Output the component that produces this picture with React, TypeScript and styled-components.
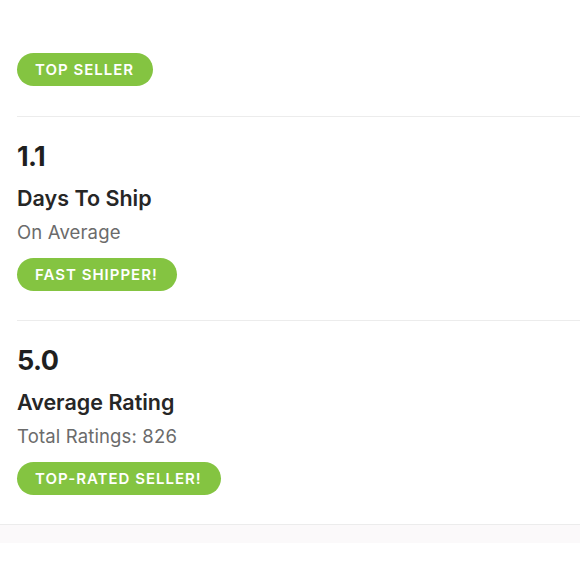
import styled, { createGlobalStyle } from "styled-components";

const GlobalStyle = createGlobalStyle`
    body {
        margin: 0;
        background: #ffffff;
        font-family: "Inter", "Liberation Sans", sans-serif;
        color: #222222;
    }
`;

const Page = styled.div`
    width: 580px;
    height: 580px;
    overflow: hidden;
    background: #ffffff;
`;

const Content = styled.div`
    padding-left: 17px;
`;

const TopBlock = styled.div`
    padding: 53px 0 30px;
`;

const Section = styled.section`
    border-top: 1px solid #ececec;
    padding: 23px 0 29px;
    display: flex;
    flex-direction: column;
    align-items: flex-start;
`;

const Stat = styled.div`
    font-size: 27px;
    line-height: 34px;
    font-weight: 700;
    color: #1f1f1f;
    letter-spacing: -0.6px;
`;

const Label = styled.div`
    margin-top: 11px;
    font-size: 21.5px;
    line-height: 26px;
    font-weight: 600;
    color: #262626;
`;

const Sub = styled.div`
    margin-top: 10px;
    font-size: 18.5px;
    line-height: 22px;
    color: #6b6b6b;
    letter-spacing: 0.15px;
`;

const Pill = styled.span<{ $spaced?: boolean }>`
    display: inline-flex;
    align-items: center;
    height: 33px;
    margin-top: ${(props) => (props.$spaced ? "15px" : "0")};
    padding: 0 19px 0 18px;
    border-radius: 17px;
    background: #84c441;
    color: #ffffff;
    font-size: 15px;
    font-weight: 600;
    letter-spacing: 1px;
    text-transform: uppercase;
`;

const Footer = styled.div`
    border-top: 1px solid #ececec;
    height: 18px;
    background: #fbf9fa;
`;

interface StatData {
    value: string;
    label: string;
    sub: string;
    badge: string;
}

const stats: StatData[] = [
    { value: "1.1", label: "Days To Ship", sub: "On Average", badge: "Fast Shipper!" },
    { value: "5.0", label: "Average Rating", sub: "Total Ratings: 826", badge: "Top-Rated Seller!" },
];

function App() {
    return (
        <Page>
            <GlobalStyle />
            <Content>
                <TopBlock>
                    <Pill>Top Seller</Pill>
                </TopBlock>
                {stats.map((s) => (
                    <Section key={s.label}>
                        <Stat>{s.value}</Stat>
                        <Label>{s.label}</Label>
                        <Sub>{s.sub}</Sub>
                        <Pill $spaced>{s.badge}</Pill>
                    </Section>
                ))}
            </Content>
            <Footer />
        </Page>
    );
}

export default App;
